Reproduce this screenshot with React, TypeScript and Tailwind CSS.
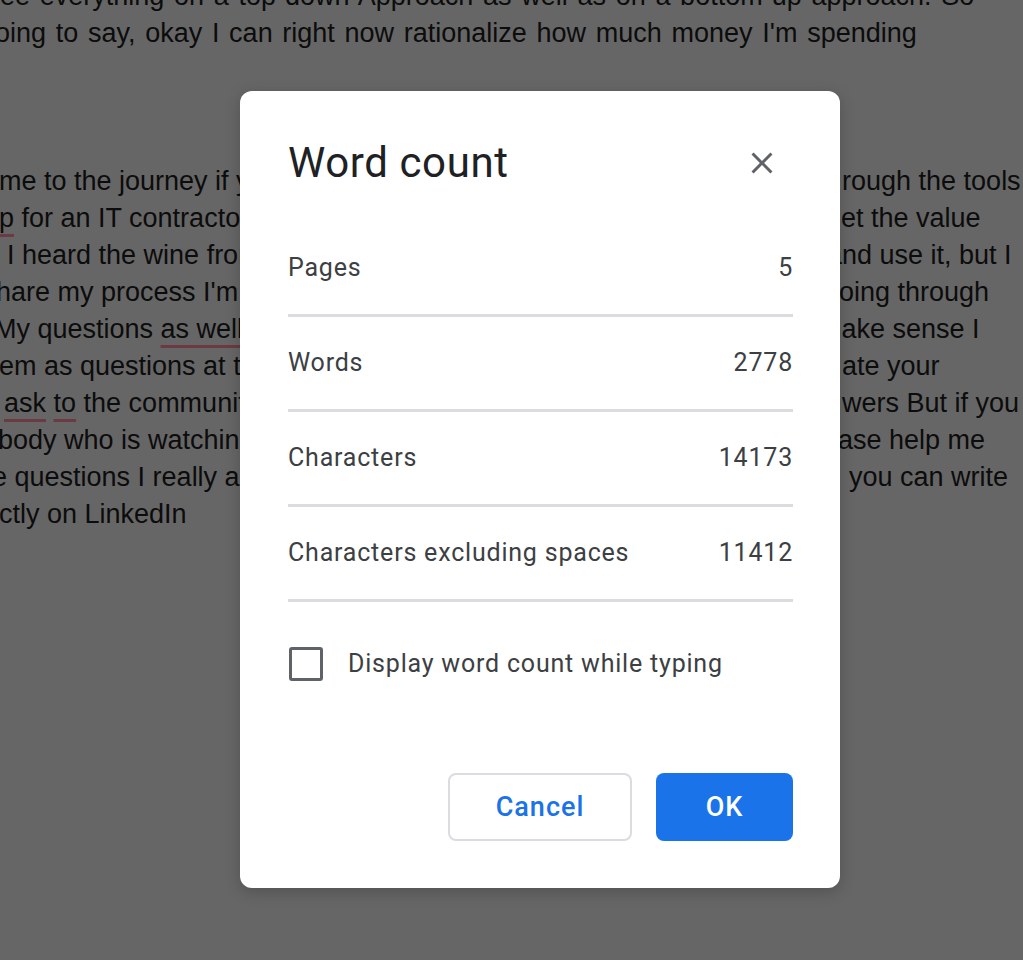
import React from "react";

type Line = { l: React.ReactNode; lm: number; r?: string; rm?: number; ws?: number };

const U = ({ children }: { children: React.ReactNode }) => (
  <span className="underline decoration-[#6b3a42] decoration-[3px] underline-offset-[7px]">{children}</span>
);

const lines: Line[] = [
  { l: <>ee everything on a top-down Approach as well as on a bottom-up approach. So</>, lm: 0, ws: 2.2 },
  { l: <>oing to say, okay I can right now rationalize how much money I'm spending</>, lm: -5, ws: 2.2 },
  { l: null, lm: 0 },
  { l: null, lm: 0 },
  { l: null, lm: 0 },
  { l: <>me to the journey if you</>, lm: -1, r: "rough the tools", rm: 2 },
  { l: <><U>p</U> for an IT contractor</>, lm: -1, r: "get the value", rm: -14 },
  { l: <>I heard the wine from</>, lm: 7, r: "and use it, but I", rm: -13 },
  { l: <>hare my process I'm</>, lm: -4, r: "going through", rm: -16 },
  { l: <>My questions <U>as well</U></>, lm: -6, r: "make sense I", rm: -21 },
  { l: <>em as questions at the</>, lm: -1, r: "ate your", rm: 2 },
  { l: <><U>ask</U> <U>to</U> the community</>, lm: 4, r: "wers But if you", rm: 2 },
  { l: <>body who is watching</>, lm: -2, r: "ase help me", rm: -2 },
  { l: <>e questions I really ask</>, lm: -8, r: "you can write", rm: 9 },
  { l: <>ctly on LinkedIn</>, lm: -1 },
];

const rows: [string, string][] = [
  ["Pages", "5"],
  ["Words", "2778"],
  ["Characters", "14173"],
  ["Characters excluding spaces", "11412"],
];

export default function App() {
  return (
    <div className="relative h-[960px] w-full overflow-hidden bg-[#666666]">
      <div className="mt-[-22px] font-['Liberation_Sans',Arial,sans-serif] text-[27px] leading-[37px] text-[#0c0c0c]">
        {lines.map((ln, i) => (
          <div key={i} className="flex h-[37px] whitespace-nowrap">
            {ln.r === undefined ? (
              <div className="overflow-hidden">
                <span className="inline-block" style={{ marginLeft: ln.lm, wordSpacing: ln.ws }}>{ln.l}</span>
              </div>
            ) : (
              <>
                <div className="w-[240px] shrink-0 overflow-hidden">
                  <span className="inline-block" style={{ marginLeft: ln.lm }}>{ln.l}</span>
                </div>
                <div className="w-[600px] shrink-0" />
                <div className="flex-1 overflow-hidden">
                  <span className="inline-block" style={{ marginLeft: ln.rm }}>{ln.r}</span>
                </div>
              </>
            )}
          </div>
        ))}
      </div>

      <div className="absolute left-[240px] top-[91px] flex h-[797px] w-[600px] flex-col rounded-[12px] bg-white pl-[48px] pr-[47px] pt-[48px] font-['Roboto',sans-serif] shadow-[0_4px_16px_rgba(0,0,0,0.2)]">
        <div className="mb-[35px] flex h-[48px] items-center justify-between">
          <div className="text-[42px] leading-[48px] tracking-[0.6px] text-[#202124]">Word count</div>
          <svg width="36" height="36" viewBox="0 0 24 24" className="mr-[13px]" fill="#5f6368">
            <path d="M19 6.41L17.59 5 12 10.59 6.41 5 5 6.41 10.59 12 5 17.59 6.41 19 12 13.41 17.59 19 19 17.59 13.41 12z" />
          </svg>
        </div>
        {rows.map(([k, v]) => (
          <div key={k}>
            <div className="flex h-[92px] items-center justify-between text-[25px] tracking-[0.8px] text-[#3c4043]">
              <span>{k}</span>
              <span>{v}</span>
            </div>
            <div className="h-[3px] bg-[#dadce0]" />
          </div>
        ))}
        <div className="mt-[43px] flex items-center">
          <div className="ml-[1px] h-[34px] w-[34px] rounded-[3px] border-[3px] border-[#5f6368]" />
          <span className="ml-[25px] text-[25px] tracking-[0.8px] text-[#3c4043]">Display word count while typing</span>
        </div>
        <div className="mt-auto mb-[47px] flex justify-end gap-[24px]">
          <button className="flex h-[68px] w-[184px] items-center justify-center rounded-[8px] border-2 border-[#dadce0] bg-white text-[27px] font-medium tracking-[1px] text-[#1a73e8]">
            Cancel
          </button>
          <button className="flex h-[68px] w-[137px] items-center justify-center rounded-[8px] bg-[#1a73e8] text-[27px] font-medium tracking-[1px] text-white">
            OK
          </button>
        </div>
      </div>
    </div>
  );
}
